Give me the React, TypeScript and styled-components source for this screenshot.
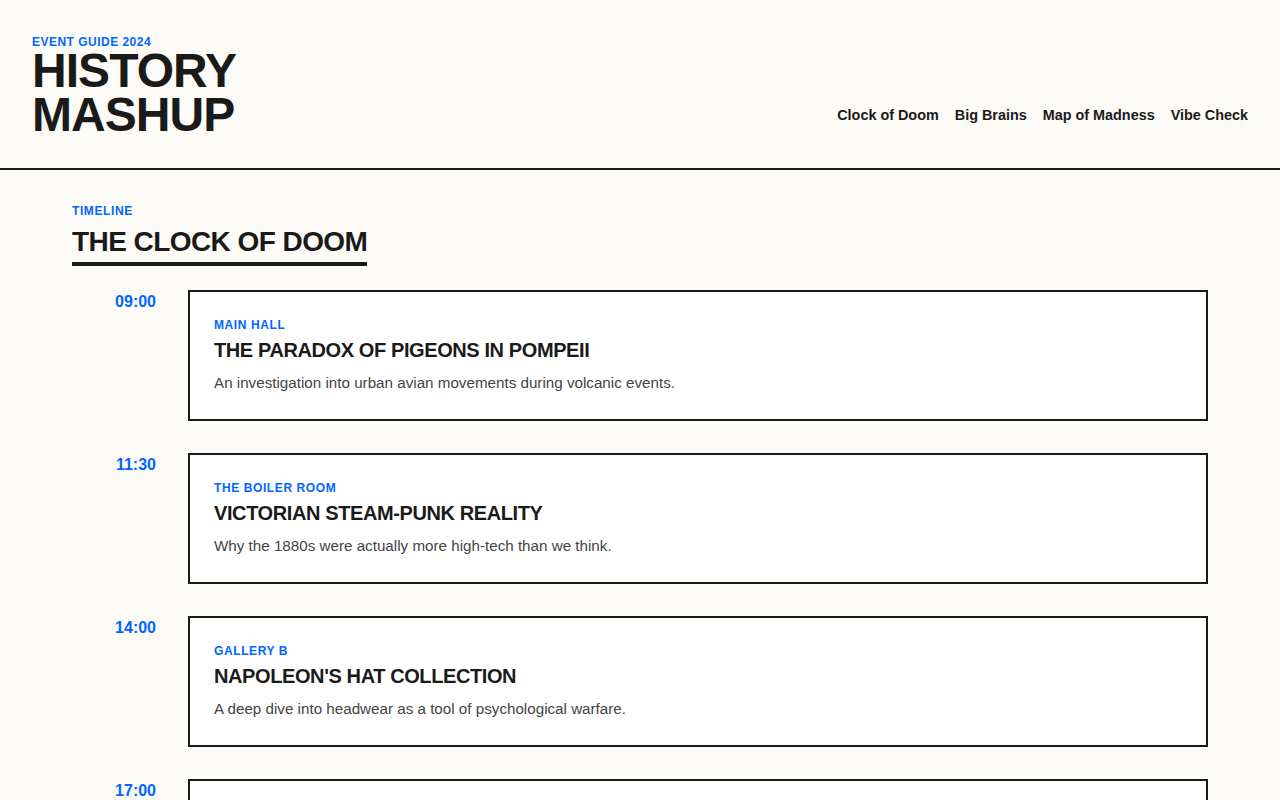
import styled, { createGlobalStyle } from 'styled-components';

interface EventItem {
    time: string;
    venue: string;
    title: string;
    description: string;
}

const events: EventItem[] = [
    {
        time: '09:00',
        venue: 'Main Hall',
        title: 'The Paradox of Pigeons in Pompeii',
        description: 'An investigation into urban avian movements during volcanic events.',
    },
    {
        time: '11:30',
        venue: 'The Boiler Room',
        title: 'Victorian Steam-Punk Reality',
        description: 'Why the 1880s were actually more high-tech than we think.',
    },
    {
        time: '14:00',
        venue: 'Gallery B',
        title: "Napoleon's Hat Collection",
        description: 'A deep dive into headwear as a tool of psychological warfare.',
    },
    {
        time: '17:00',
        venue: 'The Rooftop',
        title: 'Cleopatra Was Closer to the Moon Landing',
        description: 'A closing talk on how strangely compressed the calendar really is.',
    },
];

const navLinks = ['Clock of Doom', 'Big Brains', 'Map of Madness', 'Vibe Check'];

const GlobalStyle = createGlobalStyle`
    * {
        box-sizing: border-box;
    }

    body {
        margin: 0;
        background: #fcfbf7;
        color: #1a1a1a;
        font-family: "Liberation Sans", Arial, sans-serif;
    }
`;

const Header = styled.header`
    display: flex;
    justify-content: space-between;
    align-items: flex-end;
    padding: 35px 32px 32px;
    border-bottom: 2px solid #1a1a1a;
`;

const Eyebrow = styled.div`
    font-size: 12px;
    line-height: 1.2;
    font-weight: 700;
    letter-spacing: 0.04em;
    text-transform: uppercase;
    color: #0066ff;
`;

const SiteTitle = styled.h1`
    margin: 0;
    font-size: 48px;
    line-height: 0.9;
    font-weight: 700;
    letter-spacing: -0.02em;
    text-transform: uppercase;
`;

const Nav = styled.nav`
    display: flex;
    gap: 16px;
    padding-bottom: 11px;
`;

const NavLink = styled.a`
    font-size: 14.4px;
    line-height: 1.2;
    font-weight: 700;
    color: #1a1a1a;
    text-decoration: none;
    cursor: pointer;
`;

const Main = styled.main`
    padding: 32px 72px;
`;

const Kicker = styled.div`
    font-size: 12px;
    line-height: 1.5;
    font-weight: 700;
    letter-spacing: 0.05em;
    text-transform: uppercase;
    color: #0066ff;
`;

const SectionTitle = styled.h2`
    display: inline-block;
    margin: 5px 0 24px;
    padding-bottom: 4px;
    font-size: 28px;
    line-height: 1.2;
    font-weight: 700;
    letter-spacing: -0.02em;
    text-transform: uppercase;
    border-bottom: 4px solid #1a1a1a;
`;

const Timeline = styled.div`
    display: flex;
    flex-direction: column;
    gap: 32px;
`;

const Row = styled.div`
    display: grid;
    grid-template-columns: 84px 1fr;
    gap: 32px;
    align-items: start;
`;

const Time = styled.div`
    text-align: right;
    font-size: 16px;
    line-height: 1.5;
    font-weight: 700;
    color: #0066ff;
`;

const Card = styled.article`
    background: #ffffff;
    border: 2px solid #1a1a1a;
    padding: 24px;
`;

const Venue = styled(Kicker)`
    margin-bottom: 4px;
`;

const CardTitle = styled.h3`
    margin: 0 0 10px;
    font-size: 20px;
    line-height: 1.2;
    font-weight: 700;
    letter-spacing: -0.02em;
    text-transform: uppercase;
`;

const Description = styled.p`
    margin: 0;
    font-size: 15.2px;
    line-height: 1.5;
    color: #444444;
`;

export default function App() {
    return (
        <>
            <GlobalStyle />
            <Header>
                <div>
                    <Eyebrow>Event Guide 2024</Eyebrow>
                    <SiteTitle>
                        History
                        <br />
                        Mashup
                    </SiteTitle>
                </div>
                <Nav>
                    {navLinks.map((link) => (
                        <NavLink key={link}>{link}</NavLink>
                    ))}
                </Nav>
            </Header>
            <Main>
                <Kicker>Timeline</Kicker>
                <SectionTitle>The Clock of Doom</SectionTitle>
                <Timeline>
                    {events.map((ev) => (
                        <Row key={ev.time}>
                            <Time>{ev.time}</Time>
                            <Card>
                                <Venue>{ev.venue}</Venue>
                                <CardTitle>{ev.title}</CardTitle>
                                <Description>{ev.description}</Description>
                            </Card>
                        </Row>
                    ))}
                </Timeline>
            </Main>
        </>
    );
}
